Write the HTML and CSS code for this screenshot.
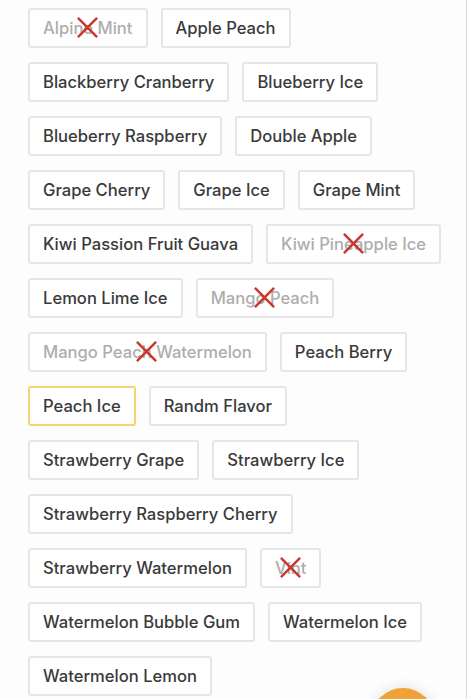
FILE: index.html
```html
<!DOCTYPE html>
<html lang="en">
<head>
    <meta charset="UTF-8">
    <meta name="viewport" content="width=device-width, initial-scale=1.0">
    <title>Flavors</title>
    <link rel="stylesheet" href="styles.css">
</head>
<body>
    <div class="page">
        <div class="flavor-list">
            <div class="chip sold-out">Alpine Mint<svg class="cross" viewBox="0 0 24 24"><path d="M2 2L22 22M22 2L2 22"/></svg></div>
            <div class="chip">Apple Peach</div>
            <div class="chip">Blackberry Cranberry</div>
            <div class="chip">Blueberry Ice</div>
            <div class="chip">Blueberry Raspberry</div>
            <div class="chip">Double Apple</div>
            <div class="chip">Grape Cherry</div>
            <div class="chip">Grape Ice</div>
            <div class="chip">Grape Mint</div>
            <div class="chip">Kiwi Passion Fruit Guava</div>
            <div class="chip sold-out">Kiwi Pineapple Ice<svg class="cross" viewBox="0 0 24 24"><path d="M2 2L22 22M22 2L2 22"/></svg></div>
            <div class="chip">Lemon Lime Ice</div>
            <div class="chip sold-out">Mango Peach<svg class="cross" viewBox="0 0 24 24"><path d="M2 2L22 22M22 2L2 22"/></svg></div>
            <div class="chip sold-out">Mango Peach Watermelon<svg class="cross" viewBox="0 0 24 24"><path d="M2 2L22 22M22 2L2 22"/></svg></div>
            <div class="chip">Peach Berry</div>
            <div class="chip selected">Peach Ice</div>
            <div class="chip">Randm Flavor</div>
            <div class="chip">Strawberry Grape</div>
            <div class="chip">Strawberry Ice</div>
            <div class="chip">Strawberry Raspberry Cherry</div>
            <div class="chip">Strawberry Watermelon</div>
            <div class="chip sold-out">Vint<svg class="cross" viewBox="0 0 24 24"><path d="M2 2L22 22M22 2L2 22"/></svg></div>
            <div class="chip">Watermelon Bubble Gum</div>
            <div class="chip">Watermelon Ice</div>
            <div class="chip">Watermelon Lemon</div>
        </div>
    </div>
    <button class="fab" aria-label="Cart"></button>
</body>
</html>
```
FILE: styles.css
```css
body {
    margin: 0;
    font-family: Inter, "Noto Sans", sans-serif;
    background-color: #fdfdfd;
    overflow: hidden;
}
.page {
    min-height: 699px;
    border-right: 1px solid #dcdcdc;
    box-sizing: border-box;
}
.flavor-list {
    display: flex;
    flex-wrap: wrap;
    gap: 14px 13px;
    padding: 8px 20px 0 28px;
}
.chip {
    position: relative;
    height: 40px;
    padding: 0 13px;
    display: flex;
    align-items: center;
    border: 2px solid #e6e6e6;
    border-radius: 3px;
    background-color: #fff;
    color: #3a3a3a;
    font-size: 16.6px;
    font-weight: 500;
    box-sizing: border-box;
    white-space: nowrap;
}
.chip.selected {
    border-color: #f4d56e;
}
.chip.sold-out {
    color: #adadad;
}
.cross {
    position: absolute;
    left: 50%;
    top: 50%;
    width: 23px;
    height: 23px;
    margin: -12px 0 0 -12px;
    fill: none;
    stroke: #c9382d;
    stroke-width: 2.6;
}
.fab {
    position: fixed;
    right: 32px;
    bottom: -53px;
    width: 64px;
    height: 64px;
    border: none;
    border-radius: 50%;
    background-color: #f0a236;
    box-shadow: 0 0 14px rgba(0, 0, 0, 0.12);
}
```
